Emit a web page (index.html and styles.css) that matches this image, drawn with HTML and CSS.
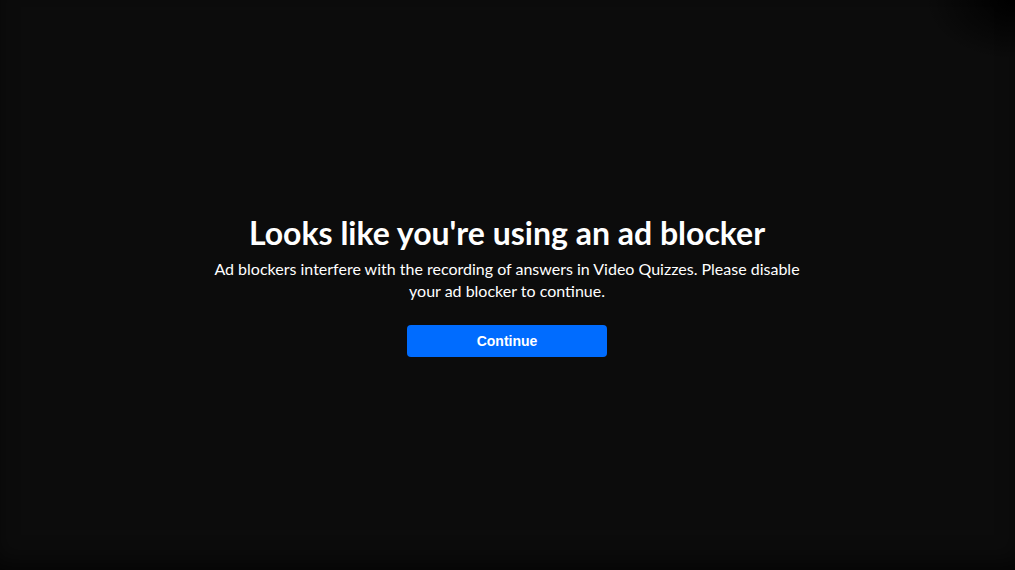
FILE: index.html
```html
<!DOCTYPE html>
<html lang="en">
<head>
    <meta charset="UTF-8">
    <title>Ad blocker</title>
    <link rel="stylesheet" href="styles.css">
</head>
<body>
    <div class="overlay">
        <div class="notice">
            <h1 class="title">Looks like you're using an ad blocker</h1>
            <p class="text">Ad blockers interfere with the recording of answers in Video Quizzes. Please disable your ad blocker to continue.</p>
            <button class="btn" type="button">Continue</button>
        </div>
    </div>
</body>
</html>
```
FILE: styles.css
```css
html,body,h1,p{
    margin:0;
    padding:0;
}
body{
    background-color:#0c0c0c;
    font-family:Lato,"Noto Sans",sans-serif;
    color:#fff;
}
.overlay{
    height:570px;
    padding-right:1px;
    display:flex;
    align-items:center;
    justify-content:center;
    box-shadow:inset 0 -14px 24px -8px rgba(0,0,0,.7);
    background:radial-gradient(ellipse 90px 60px at 100% 0,#000,rgba(0,0,0,0));
}
.notice{
    width:600px;
    display:flex;
    flex-direction:column;
    align-items:center;
    text-align:center;
}
.title{
    font-size:32px;
    line-height:40px;
    font-weight:700;
}
.text{
    font-size:16px;
    line-height:22px;
    margin-top:5px;
}
.btn{
    margin-top:23px;
    width:200px;
    height:32px;
    border:0;
    border-radius:4px;
    background-color:#006cff;
    color:#fff;
    font:700 14px "Liberation Sans",Arial,sans-serif;
    cursor:pointer;
}
```
